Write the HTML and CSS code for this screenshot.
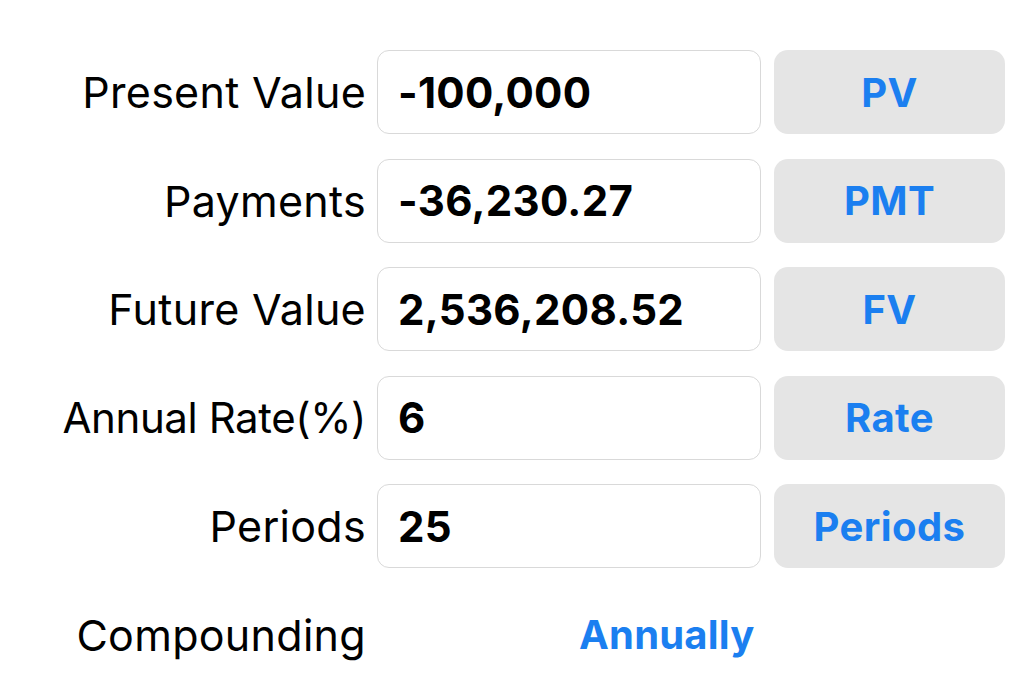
FILE: index.html
```html
<!DOCTYPE html>
<html>
<head>
<meta charset="utf-8">
<link rel="stylesheet" href="styles.css">
</head>
<body>
<main class="form">
  <div class="row">
    <div class="label">Present Value</div>
    <div class="field">-100,000</div>
    <div class="btn">PV</div>
  </div>
  <div class="row">
    <div class="label">Payments</div>
    <div class="field">-36,230.27</div>
    <div class="btn">PMT</div>
  </div>
  <div class="row">
    <div class="label">Future Value</div>
    <div class="field">2,536,208.52</div>
    <div class="btn">FV</div>
  </div>
  <div class="row">
    <div class="label label-tight">Annual Rate(%)</div>
    <div class="field">6</div>
    <div class="btn">Rate</div>
  </div>
  <div class="row">
    <div class="label">Periods</div>
    <div class="field">25</div>
    <div class="btn">Periods</div>
  </div>
  <div class="row compound">
    <div class="label">Compounding</div>
    <div class="choice">Annually</div>
  </div>
</main>
</body>
</html>
```
FILE: styles.css
```css
html, body {
  margin: 0;
  padding: 0;
  background: #ffffff;
}
body {
  font-family: Inter, "Noto Sans", "Liberation Sans", sans-serif;
  color: #000;
  width: 1024px;
  height: 679px;
  overflow: hidden;
}
.form {
  display: flex;
  flex-direction: column;
  gap: 24.5px;
  padding-top: 50px;
}
.row {
  display: flex;
  align-items: center;
  height: 84px;
}
.label {
  width: 366px;
  margin-right: 11px;
  text-align: right;
  font-size: 43px;
  font-weight: 400;
  letter-spacing: 0.3px;
  white-space: nowrap;
}
.label-tight {
  font-size: 42px;
  letter-spacing: -0.4px;
}
.field {
  box-sizing: border-box;
  width: 384px;
  height: 84px;
  margin-right: 13px;
  border: 1px solid #d9d9d9;
  border-radius: 12px;
  padding-left: 20px;
  display: flex;
  align-items: center;
  font-size: 42px;
  font-weight: 700;
  letter-spacing: 0.3px;
}
.btn {
  box-sizing: border-box;
  width: 231px;
  height: 84px;
  border-radius: 14px;
  background: #e5e5e5;
  color: #1b7ff0;
  display: flex;
  align-items: center;
  justify-content: center;
  font-size: 40px;
  font-weight: 700;
  letter-spacing: 0.4px;
}
.choice {
  padding-left: 202px;
  color: #1b7ff0;
  font-size: 40px;
  font-weight: 700;
  letter-spacing: 0.2px;
}
```
